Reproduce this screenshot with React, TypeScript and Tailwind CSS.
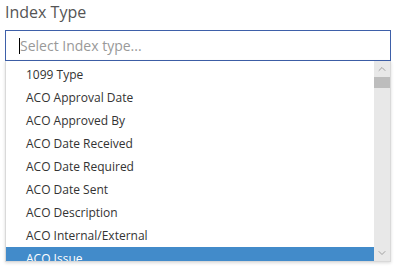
import { ChevronUp, ChevronDown } from "lucide-react";

const INDEX_TYPES = [
  "1099 Type",
  "ACO Approval Date",
  "ACO Approved By",
  "ACO Date Received",
  "ACO Date Required",
  "ACO Date Sent",
  "ACO Description",
  "ACO Internal/External",
  "ACO Issue",
];

const SELECTED = "ACO Issue";

export default function App() {
  return (
    <div
      className="w-[396px] h-[268px] overflow-hidden bg-white px-[5px]"
      style={{ fontFamily: '"Open Sans", "Noto Sans", sans-serif' }}
    >
      <div className="h-[24px] text-[16px] leading-[24px] text-[#555]">Index Type</div>

      {/* Search input */}
      <div className="mt-[6px] flex h-[31px] w-[386px] items-center border border-[#3e60a9] pl-[13px]">
        <span className="h-[16px] w-px bg-black" />
        <span className="text-[14px] text-[#999]">Select Index type...</span>
      </div>

      {/* Options list */}
      <div className="flex h-[201px] w-[386px] overflow-hidden border border-t-0 border-[#d9d9d9] shadow-[0_1px_3px_rgba(0,0,0,0.15)]">
        <ul className="flex-1 pt-[2px]">
          {INDEX_TYPES.map((type) => (
            <li
              key={type}
              className={
                type === SELECTED
                  ? "h-[23px] pl-[20px] text-[12px] leading-[23px] text-white bg-[#428bca]"
                  : "h-[23px] pl-[20px] text-[12px] leading-[23px] text-[#333]"
              }
            >
              {type}
            </li>
          ))}
        </ul>

        {/* Scrollbar */}
        <div className="flex w-[16px] flex-col bg-[#e8e8e8]">
          <div className="flex h-[16px] items-center justify-center">
            <ChevronUp size={12} strokeWidth={1.5} className="text-[#888]" />
          </div>
          <div className="h-[11px] bg-[#bdbdbd]" />
          <div className="flex-1" />
          <div className="flex h-[16px] items-center justify-center">
            <ChevronDown size={12} strokeWidth={1.5} className="text-[#888]" />
          </div>
        </div>
      </div>
    </div>
  );
}
